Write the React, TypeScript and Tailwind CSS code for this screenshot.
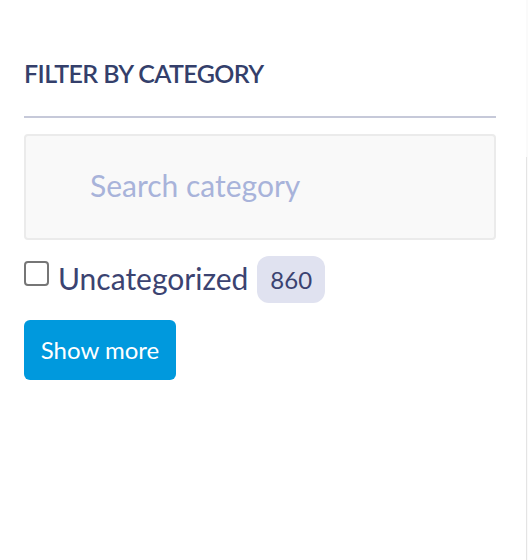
import React from 'react';

const App: React.FC = () => {
  return (
    <div className="w-[528px] h-[560px] bg-white flex font-['Lato',sans-serif]">
      <div className="flex-1 pl-6 pr-[30px] pt-[58px]">
        <h3 className="text-[25px] leading-[30px] font-semibold text-[#343f6b] tracking-[-0.6px]">FILTER BY CATEGORY</h3>
        <div className="mt-[28px] h-[2px] bg-[#c6c9d9]" />
        <div className="mt-[16px] h-[106px] border-2 border-[#ebebeb] bg-[#f9f9f9] rounded-[4px] flex items-center pl-[64px] pb-[4px]">
          <input
            className="w-full bg-transparent outline-none text-[30px] text-[#3b4371] placeholder:text-[#a8b3da]"
            placeholder="Search category"
          />
        </div>
        <div className="mt-[16px] flex items-center">
          <span className="mb-[12px] w-[25px] h-[25px] border-2 border-[#767676] rounded-[4px] bg-white" />
          <span className="ml-[9px] mb-[4px] text-[30px] leading-[36px] text-[#3b4371]">Uncategorized</span>
          <span className="ml-[9px] h-[47px] px-[13px] rounded-[12px] bg-[#e0e2f0] text-[24px] text-[#3b4371] flex items-center">860</span>
        </div>
        <button className="mt-[17px] h-[60px] w-[152px] rounded-[6px] bg-[#0099dd] text-white text-[24px]">Show more</button>
      </div>
      <div className="w-[2px] flex flex-col bg-[#fafafa]">
        <div className="h-[157px]" />
        <div className="flex-1 border-l border-[#e4e4e4]" />
      </div>
    </div>
  );
};

export default App;
